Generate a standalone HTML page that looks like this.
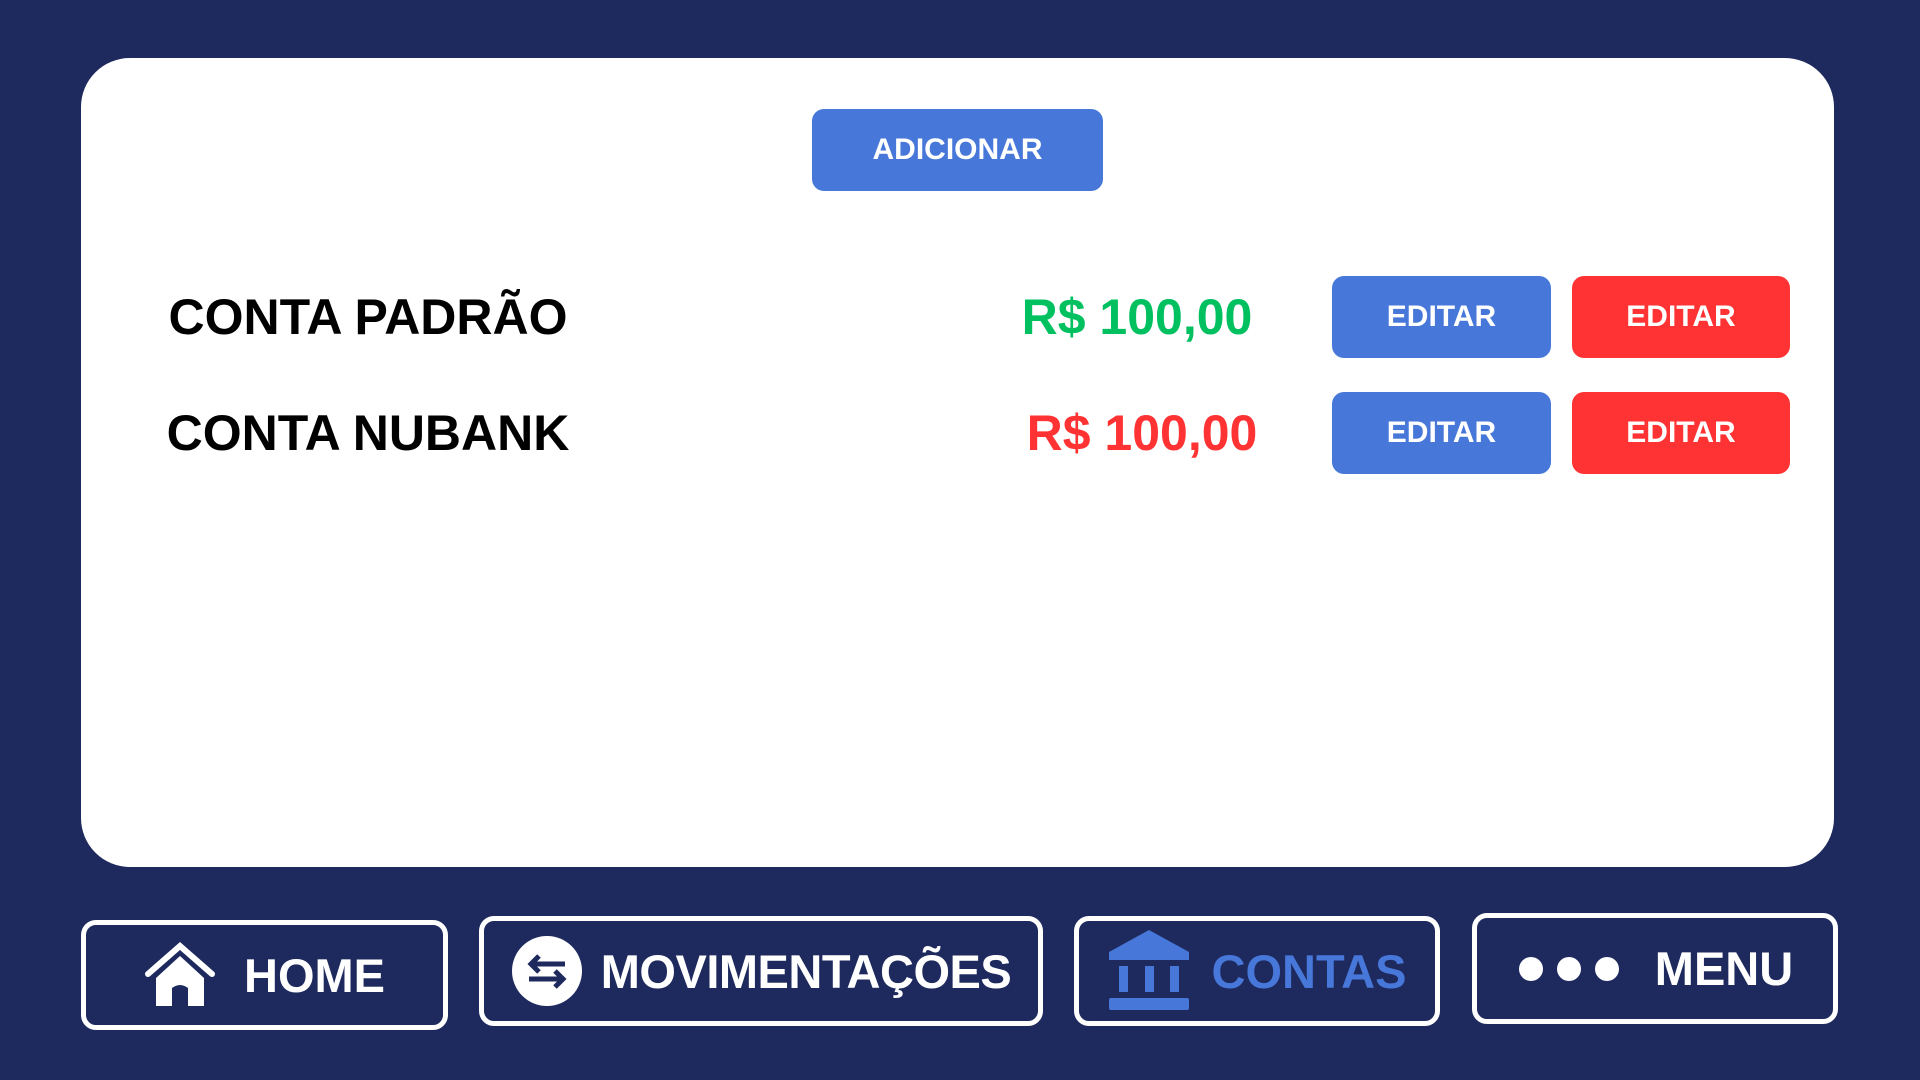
<!DOCTYPE html>
<html><head><meta charset="utf-8"><style>
*{margin:0;padding:0;box-sizing:border-box}
body{width:1920px;height:1080px;background:#1e2a5e;position:relative;overflow:hidden;font-family:"Liberation Sans",sans-serif;font-weight:bold}
.a{position:absolute;display:flex;align-items:center;justify-content:center;white-space:nowrap}
.card{position:absolute;left:81px;top:58px;width:1753px;height:809px;background:#fff;border-radius:49px}
.btn{color:#fff;font-size:30px;border-radius:12px}
.blue{background:#4677d9}.red{background:#ff3333}
.nav{border:5px solid #fff;border-radius:15px;color:#fff;font-size:47px}
</style></head><body>
<div class="card"></div>
<div class="a btn blue" style="left:812px;top:109px;width:291px;height:82px">ADICIONAR</div>

<div class="a" style="left:118px;top:287px;width:500px;height:60px;font-size:50px;color:#000">CONTA PADRÃO</div>
<div class="a" style="left:987px;top:287px;width:300px;height:60px;font-size:50px;color:#00c060">R$ 100,00</div>
<div class="a btn blue" style="left:1332px;top:276px;width:219px;height:82px">EDITAR</div>
<div class="a btn red" style="left:1572px;top:276px;width:218px;height:82px">EDITAR</div>

<div class="a" style="left:118px;top:403px;width:500px;height:60px;font-size:50px;color:#000">CONTA NUBANK</div>
<div class="a" style="left:992px;top:403px;width:300px;height:60px;font-size:50px;color:#ff3333">R$ 100,00</div>
<div class="a btn blue" style="left:1332px;top:392px;width:219px;height:82px">EDITAR</div>
<div class="a btn red" style="left:1572px;top:392px;width:218px;height:82px">EDITAR</div>

<div class="a nav" style="left:81px;top:920px;width:367px;height:110px">
<svg width="72" height="66" viewBox="0 0 72 66" style="margin-right:28px"><path d="M4 32 L36 4 L68 32" fill="none" stroke="#fff" stroke-width="6" stroke-linecap="round"/><path d="M12 36 L36 14 L60 36 L60 64 L44 64 L44 46 Q36 40 28 46 L28 64 L12 64 Z" fill="#fff"/></svg>HOME</div>
<div class="a nav" style="left:479px;top:916px;width:564px;height:110px;letter-spacing:-0.5px">
<svg width="72" height="72" viewBox="0 0 72 72" style="margin-right:18px"><circle cx="36" cy="36" r="35" fill="#fff"/><path d="M54 29 H22 M28 21 L20 29 L28 37 M18 44 H50 M44 36 L52 44 L44 52" fill="none" stroke="#1e2a5e" stroke-width="5"/></svg>MOVIMENTAÇÕES</div>
<div class="a nav" style="left:1074px;top:916px;width:366px;height:110px;color:#4677d9">
<svg width="82" height="82" viewBox="0 0 82 82" style="margin-right:22px"><path d="M41 0 L81 22 L81 30 L1 30 L1 22 Z" fill="#4677d9"/><rect x="11" y="36" width="9" height="26" fill="#4677d9"/><rect x="37" y="36" width="9" height="26" fill="#4677d9"/><rect x="62" y="36" width="9" height="26" fill="#4677d9"/><rect x="1" y="68" width="80" height="12" rx="2" fill="#4677d9"/></svg>CONTAS</div>
<div class="a nav" style="left:1472px;top:913px;width:366px;height:111px">
<svg width="110" height="30" viewBox="0 0 110 30" style="margin-right:28px"><circle cx="14" cy="15" r="12" fill="#fff"/><circle cx="52" cy="15" r="12" fill="#fff"/><circle cx="90" cy="15" r="12" fill="#fff"/></svg>MENU</div>
</body></html>
